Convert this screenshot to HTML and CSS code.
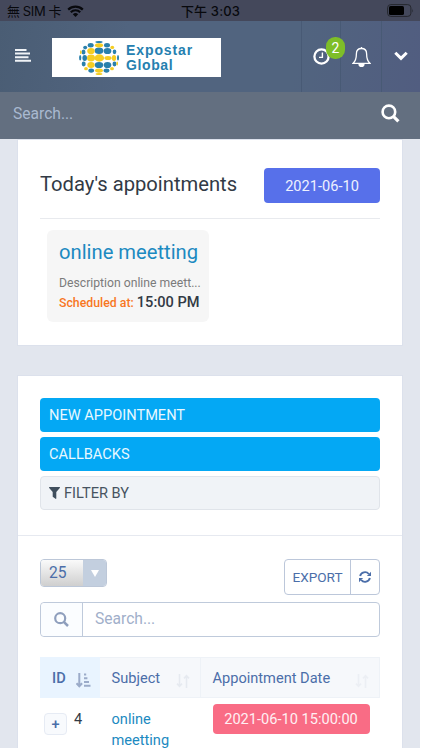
FILE: index.html
```html
<!DOCTYPE html>
<html lang="en">
<head>
    <meta charset="UTF-8">
    <meta name="viewport" content="width=device-width, initial-scale=1.0">
    <title>Appointments - Expostar Global</title>
    <link rel="stylesheet" href="styles.css">
</head>
<body>
<div class="screen">
    <div class="status-bar">
        <div class="carrier">
            <span class="carrier-name">無 SIM 卡</span>
            <svg class="wifi" viewBox="0 0 17 12">
                <path d="M1.2 4.6a10.4 10.4 0 0 1 14.6 0M3.8 7.2a6.7 6.7 0 0 1 9.4 0" fill="none" stroke="#08090d" stroke-width="2.2"/>
                <path d="M8.5 12 5.8 9.3a3.8 3.8 0 0 1 5.4 0z" fill="#08090d"/>
            </svg>
        </div>
        <div class="clock">下午 3:03</div>
        <svg class="battery" viewBox="0 0 27 13">
            <rect x=".6" y=".6" width="23.3" height="11.8" rx="3.2" fill="none" stroke="#25272e" stroke-width="1"/>
            <rect x="2" y="2" width="15" height="9" rx="1.6" fill="#000"/>
            <path d="M25.3 4.5q1.3 2 0 4z" fill="#25272e"/>
        </svg>
    </div>

    <header class="navbar">
        <svg class="menu-icon" viewBox="0 0 16 13">
            <path d="M0 1h11.5M0 4.6h15M0 8.2h13.5M0 11.8h16" stroke="#f0f3f7" stroke-width="2"/>
        </svg>
        <div class="logo">
            <svg class="globe" viewBox="0 0 40 34">
                <g fill="#2a80ac">
                    <ellipse cx="11.7" cy="4.2" rx="3" ry="2.2"/>
                    <ellipse cx="28" cy="4.2" rx="3" ry="2.2"/>
                    <ellipse cx="6.2" cy="6.6" rx="2" ry="1.8"/>
                    <ellipse cx="20" cy="9.8" rx="4.3" ry="3.2"/>
                    <ellipse cx="28.5" cy="10" rx="3.9" ry="3.1"/>
                    <ellipse cx="4.5" cy="11" rx="2" ry="2.5"/>
                    <ellipse cx="39" cy="16.8" rx="1" ry="2.8"/>
                    <ellipse cx="5.7" cy="17" rx="2.3" ry="2.9"/>
                    <ellipse cx="1.2" cy="16.8" rx="1.1" ry="2.8"/>
                    <ellipse cx="20" cy="24" rx="4.3" ry="3.1"/>
                    <ellipse cx="28.5" cy="24" rx="3.8" ry="3.1"/>
                    <ellipse cx="4.7" cy="23" rx="2" ry="2.4"/>
                    <ellipse cx="20" cy="1.1" rx="3.6" ry="1.1"/>
                    <ellipse cx="35.5" cy="23" rx="2" ry="2.4"/>
                    <ellipse cx="12.2" cy="29.6" rx="2.9" ry="2.1"/>
                    <ellipse cx="27.5" cy="29.6" rx="2.9" ry="2.1"/>
                    <ellipse cx="35.5" cy="10.8" rx="1.8" ry="2.4"/>
                </g>
                <g fill="#f5cd22">
                    <ellipse cx="20" cy="4.3" rx="4.1" ry="2.1"/>
                    <ellipse cx="12" cy="10" rx="3.8" ry="3.1"/>
                    <ellipse cx="12" cy="17" rx="4" ry="3.4"/>
                    <ellipse cx="20.3" cy="17" rx="4.8" ry="3.7"/>
                    <ellipse cx="29" cy="17" rx="3.6" ry="2.1"/>
                    <ellipse cx="35" cy="17" rx="2.2" ry="2.9"/>
                    <ellipse cx="12" cy="24" rx="3.7" ry="3"/>
                    <ellipse cx="20" cy="29.6" rx="4" ry="2.1"/>
                    <ellipse cx="33.3" cy="6.4" rx="1.9" ry="1.7"/>
                    <ellipse cx="7" cy="27.7" rx="1.9" ry="1.6"/>
                    <ellipse cx="33" cy="27.7" rx="1.9" ry="1.6"/>
                    <ellipse cx="20" cy="32.9" rx="3.4" ry="1"/>
                    <ellipse cx="1.8" cy="11.3" rx=".8" ry="2"/>
                    <ellipse cx="38.2" cy="22.5" rx=".8" ry="2"/>
                </g>
            </svg>
            <div class="logo-text">
                <div>Expostar</div>
                <div class="logo-second">Global</div>
            </div>
        </div>
        <nav class="nav-icons">
            <div class="nav-item timers">
                <svg width="17" height="17" viewBox="0 0 17 17" fill="none" stroke="#fff">
                    <circle cx="8.5" cy="8.5" r="7.1" stroke-width="2.3"/>
                    <path d="M9.4 4.4v5H6" stroke-width="1.4"/>
                </svg>
                <span class="badge">2</span>
            </div>
            <div class="nav-item bell">
                <svg width="19" height="20" viewBox="0 0 19 20" fill="none" stroke="#fff" stroke-width="1.3">
                    <path d="M9.5 1.5c-3.3 0-5.1 2.3-5.1 5.2 0 5-1 7.5-3.3 9.6h16.8c-2.3-2.1-3.3-4.6-3.3-9.6 0-2.9-1.8-5.2-5.1-5.2z"/>
                    <path d="M9.5 0v2"/>
                    <path d="M7 17a2.5 2.5 0 0 0 5 0z" fill="#fff"/>
                </svg>
            </div>
            <div class="nav-item toggle">
                <svg width="14" height="10" viewBox="0 0 14 10" fill="none" stroke="#fff" stroke-width="3">
                    <path d="M1.3 1.8 7 7.4l5.7-5.6"/>
                </svg>
            </div>
        </nav>
    </header>

    <div class="top-search">
        <span>Search...</span>
        <svg width="19" height="19" viewBox="0 0 19 19" fill="none" stroke="#fff">
            <circle cx="7.9" cy="7.9" r="6.3" stroke-width="2.6"/>
            <path d="m12.4 12.4 5 5" stroke-width="3.2"/>
        </svg>
    </div>

    <main class="content">
        <section class="panel today">
            <div class="today-head">
                <h4>Today's appointments</h4>
                <button class="date-btn">2021-06-10</button>
            </div>
            <div class="appointment">
                <a class="appointment-title">online meetting</a>
                <div class="appointment-desc">Description online meett...</div>
                <div class="appointment-time"><span>Scheduled at:</span> <b>15:00 PM</b></div>
            </div>
        </section>

        <section class="panel list">
            <div class="actions">
                <a class="btn btn-info">NEW APPOINTMENT</a>
                <a class="btn btn-info">CALLBACKS</a>
                <a class="btn btn-filter">
                    <svg width="11" height="12" viewBox="0 0 11 12"><path d="M.3 0h10.4q.5.4.1.9L7.3 5v6.6q-.3.6-.8.2L3.7 9.8V5L.2.9Q-.1.4.3 0z" fill="#3f4e5d"/></svg>
                    <span>FILTER BY</span>
                </a>
            </div>

            <div class="table-area">
                <div class="table-tools">
                    <div class="length">
                        <span class="length-value">25</span>
                        <span class="length-arrow"></span>
                    </div>
                    <div class="export">
                        <span class="export-label">EXPORT</span>
                        <span class="reload">
                            <svg width="12" height="12" viewBox="0 0 12 12" fill="none" stroke="#4b6ea9" stroke-width="1.9">
                                <path d="M1.1 5A5 5 0 0 1 9.8 3M10.9 7a5 5 0 0 1-8.7 2"/>
                                <path d="M12 .8v4.1H7.9zM0 11.2V7.1h4.1z" fill="#4b6ea9" stroke="none"/>
                            </svg>
                        </span>
                    </div>
                </div>
                <div class="table-search">
                    <span class="search-addon">
                        <svg width="15" height="15" viewBox="0 0 15 15" fill="none" stroke="#8f9fbd">
                            <circle cx="6.2" cy="6.2" r="5" stroke-width="2.2"/>
                            <path d="m9.8 9.8 4.2 4.2" stroke-width="2.5"/>
                        </svg>
                    </span>
                    <span class="search-field">Search...</span>
                </div>

                <div class="table">
                    <div class="th th-id">ID
                        <svg class="sort-active" width="15" height="15" viewBox="0 0 15 15" fill="none" stroke="#9babc9" stroke-width="2">
                            <path d="M3.3 0v13M.5 10.3l2.8 3 2.8-3"/>
                            <path d="M8 1.6h2.2M8 5.3h3.4M8 9h5M8 12.8h6.5"/>
                        </svg>
                    </div>
                    <div class="th th-subject">Subject
                        <svg class="sort" width="14" height="14" viewBox="0 0 14 14" fill="none" stroke="#e6eaf0" stroke-width="1.6">
                            <path d="M3.5 0v12M1 9.6l2.5 2.8L6 9.6M10.5 14V2M8 4.4l2.5-2.8L13 4.4"/>
                        </svg>
                    </div>
                    <div class="th th-date">Appointment Date
                        <svg class="sort" width="14" height="14" viewBox="0 0 14 14" fill="none" stroke="#eceff4" stroke-width="1.6">
                            <path d="M3.5 0v12M1 9.6l2.5 2.8L6 9.6M10.5 14V2M8 4.4l2.5-2.8L13 4.4"/>
                        </svg>
                    </div>
                    <div class="td td-id"><span class="expand">+</span><span>4</span></div>
                    <div class="td td-subject"><a>online<br>meetting</a></div>
                    <div class="td td-date"><span class="label-date">2021-06-10 15:00:00</span></div>
                </div>
            </div>
        </section>
    </main>
</div>
</body>
</html>
```

FILE: styles.css
```css
* {
    box-sizing: border-box;
}
body {
    margin: 0;
    background: #fff;
    font-family: Roboto, "Noto Sans CJK TC", sans-serif;
    font-size: 14.6px;
    color: #323a45;
    overflow: hidden;
}
.screen {
    width: 420px;
    height: 748px;
    overflow: hidden;
    background: #e2e6ee;
}

/* status bar */
.status-bar {
    height: 21px;
    background: #44485b;
    display: grid;
    grid-template-columns: 1fr auto 1fr;
    align-items: center;
    padding: 0 6px 0 7px;
    color: #08090d;
    font-family: Inter, "Noto Sans CJK TC", sans-serif;
    font-size: 13px;
    line-height: 20px;
}
.carrier {
    display: flex;
    align-items: center;
    gap: 6px;
}
.carrier-name {
    white-space: nowrap;
    letter-spacing: -0.4px;
}
.wifi {
    width: 17px;
    height: 12px;
}
.clock {
    font-weight: 500;
    letter-spacing: 0.15px;
}
.battery {
    width: 27px;
    height: 13px;
    justify-self: end;
}

/* header */
.navbar {
    height: 71px;
    display: flex;
    align-items: center;
    padding-left: 15px;
    background: linear-gradient(100deg, #4a5d74 0%, #51647f 30%, #51647f 70%, #515d80 100%);
}
.menu-icon {
    width: 16px;
    height: 13px;
    margin: 0 21px 2px 0;
}
.logo {
    width: 169px;
    height: 39px;
    background: #fff;
    display: flex;
    align-items: center;
    padding-left: 27px;
    margin-top: 2px;
}
.globe {
    width: 40px;
    height: 34px;
}
.logo-text {
    margin: 1px 0 0 7px;
    font-family: "Liberation Sans", Arial, sans-serif;
    font-weight: bold;
    font-size: 14px;
    line-height: 15px;
    letter-spacing: 0.9px;
    color: #2580b0;
}
.logo-second {
    letter-spacing: 0.6px;
}
.nav-icons {
    margin-left: auto;
    display: flex;
    height: 100%;
}
.nav-item {
    position: relative;
    display: flex;
    align-items: center;
    justify-content: center;
    border-left: 1px solid #485a75;
}
.timers {
    width: 39px;
}
.bell {
    width: 41px;
}
.toggle {
    width: 39px;
}
.toggle svg {
    margin-bottom: 1px;
}
.badge {
    position: absolute;
    left: 24px;
    top: 16px;
    width: 19px;
    height: 22px;
    border-radius: 9px;
    background: #7ebe28;
    color: #fff;
    font-size: 14px;
    line-height: 22px;
    text-align: center;
    z-index: 1;
}
.top-search {
    height: 47px;
    background: #636f80;
    display: flex;
    align-items: center;
    justify-content: space-between;
    padding: 0 20px 4px 13px;
    color: #a9b9d0;
    font-size: 15.6px;
}

/* panels */
.content {
    padding: 0 17px;
}
.panel {
    background: #fff;
    border: 1px solid #dce1ec;
}
.today {
    height: 207px;
    padding: 0 22px;
}
.today-head {
    height: 79px;
    padding-top: 28px;
    display: flex;
    justify-content: space-between;
    border-bottom: 1px solid #e8eaee;
}
h4 {
    margin: 3px 0 0;
    font-size: 20.2px;
    line-height: 26px;
    font-weight: normal;
    white-space: nowrap;
}
.date-btn {
    width: 116px;
    height: 35px;
    padding: 0;
    border: none;
    border-radius: 4px;
    background: #5770ea;
    color: #eef1ff;
    font-family: inherit;
    font-size: 14.6px;
}
.appointment {
    width: 162px;
    height: 92px;
    margin: 11px 0 0 7px;
    padding: 9px 0 0 12px;
    border-radius: 6px;
    background: #f6f6f6;
    white-space: nowrap;
}
.appointment-title {
    display: block;
    font-size: 20.2px;
    line-height: 26px;
    color: #1c8ac1;
}
.appointment-desc {
    margin-top: 9px;
    font-size: 12.2px;
    line-height: 18px;
    color: #7b7b7b;
}
.appointment-time {
    font-size: 12.3px;
    line-height: 21px;
}
.appointment-time span {
    color: #f8761f;
    font-weight: 500;
}
.appointment-time b {
    font-size: 14.6px;
    font-weight: 500;
}

/* list panel */
.list {
    margin-top: 29px;
    height: 400px;
}
.actions {
    height: 160px;
    padding: 22px 22px 0;
    border-bottom: 1px solid #e6e9f0;
    display: flex;
    flex-direction: column;
    gap: 5px;
}
.btn {
    height: 34px;
    padding: 0 9px 1px;
    border-radius: 4px;
    display: flex;
    align-items: center;
    gap: 4px;
}
.btn-info {
    background: #04a8f4;
    color: #e8f8ff;
}
.btn-filter {
    padding-left: 8px;
    background: #f0f3f7;
    border: 1px solid #e0e4ea;
    color: #475361;
}
.table-area {
    padding: 23px 22px 0;
}
.table-tools {
    height: 43px;
    display: flex;
    justify-content: space-between;
    align-items: flex-start;
    color: #4b6ea9;
}
.length {
    width: 67px;
    height: 28px;
    border: 1px solid #bcc7d8;
    border-radius: 4px;
    display: flex;
    overflow: hidden;
}
.length-value {
    flex: 1;
    padding-left: 8px;
    font-size: 15.6px;
    line-height: 26px;
    background: linear-gradient(#fafafa, #cfcfcf);
}
.length-arrow {
    width: 23px;
    background: #c3cfdf;
    display: flex;
    align-items: center;
    justify-content: center;
}
.length-arrow::before {
    content: "";
    border: 4px solid transparent;
    border-top: 7px solid #fff;
    border-bottom: 0;
}
.export {
    width: 96px;
    height: 36px;
    border: 1px solid #bcc7da;
    border-radius: 4px;
    display: flex;
}
.export-label {
    flex: 1;
    font-size: 13.6px;
    line-height: 35px;
    text-align: center;
}
.reload {
    width: 29px;
    border-left: 1px solid #bcc7da;
    display: flex;
    align-items: center;
    justify-content: center;
}
.table-search {
    height: 35px;
    border: 1px solid #bfcadb;
    border-radius: 4px;
    display: flex;
}
.search-addon {
    width: 42px;
    border-right: 1px solid #bfcadb;
    background: #fbfdff;
    border-radius: 4px 0 0 4px;
    display: flex;
    align-items: center;
    justify-content: center;
}
.search-field {
    padding-left: 12px;
    font-size: 15.6px;
    line-height: 33px;
    color: #a1afca;
}

/* table */
.table {
    margin-top: 20px;
    display: grid;
    grid-template-columns: 60px 101px 179px;
    grid-template-rows: 41px auto;
}
.th {
    display: flex;
    align-items: center;
    justify-content: space-between;
    padding: 0 10px 0 11.5px;
    background: #f6f8fb;
    border: 1px solid #eef2f7;
    border-left: none;
    color: #4b6ea9;
    white-space: nowrap;
}
.th svg {
    margin-top: 6px;
}
.th-id {
    background: #e9f4ff;
    border-color: #e9f4ff;
    font-weight: 500;
    padding-left: 12px;
    padding-right: 8px;
}
.td-id {
    display: flex;
    align-items: flex-start;
    padding: 12px 0 0 4px;
    gap: 7px;
    line-height: 18px;
}
.expand {
    width: 23px;
    height: 22px;
    margin-top: 3px;
    border: 1px solid #e6ebf4;
    border-radius: 4px;
    background: #f8fafd;
    color: #4b6ea9;
    font-weight: 500;
    line-height: 20px;
    text-align: center;
}
.td-subject {
    padding: 11px 0 0 11.5px;
    line-height: 20.5px;
    color: #1c8ac1;
}
.td-date {
    padding: 6px 0 0 11.5px;
}
.label-date {
    display: block;
    width: 157px;
    height: 30px;
    border-radius: 4px;
    background: #f96c85;
    color: #fff0f3;
    line-height: 30px;
    text-align: center;
}
```
